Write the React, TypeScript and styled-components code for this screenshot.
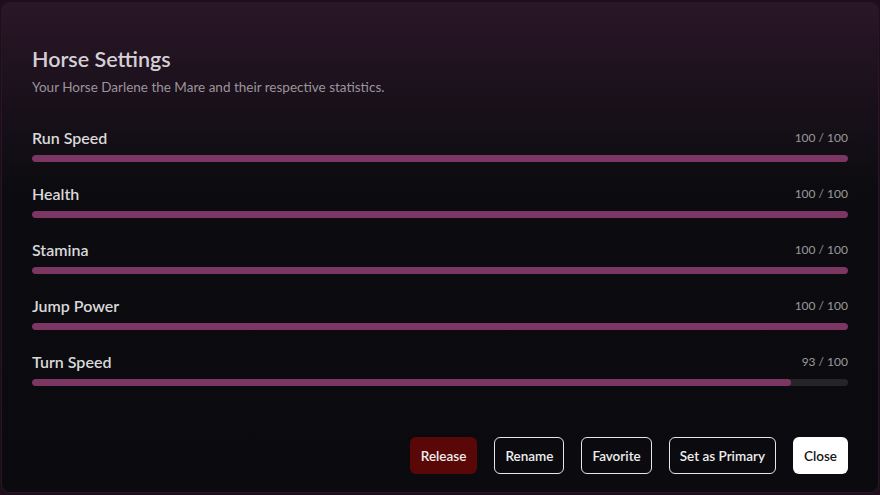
import React from "react";
import styled, { createGlobalStyle } from "styled-components";

const Global = createGlobalStyle`
  html, body { margin: 0; padding: 0; height: 100%; }
  body {
    background: #1c0e1a;
    font-family: "Source Sans Pro", Lato, "Noto Sans", sans-serif;
  }
  #root { height: 100%; }
`;

const Page = styled.div`
  box-sizing: border-box;
  height: 100vh;
  padding: 2px 1px 2px 1px;
`;

const Card = styled.div`
  box-sizing: border-box;
  height: 100%;
  border-radius: 9px;
  border: 1px solid #2a1527;
  background: linear-gradient(180deg, #2a1628 0%, #181019 22%, #0c0c10 38%, #0b0b0f 100%);
  padding: 42px 30px 18px 30px;
  display: flex;
  flex-direction: column;
`;

const Title = styled.h1`
  margin: 0;
  font-size: 21.5px;
  font-weight: 600;
  color: #d5cfd5;
  line-height: 28px;
`;

const Subtitle = styled.p`
  margin: 5px 0 0 0;
  font-size: 13.5px;
  color: #9b949b;
  line-height: 18px;
`;

const Stats = styled.div`
  margin-top: 31px;
  display: flex;
  flex-direction: column;
  gap: 21px;
`;

const Stat = styled.div`
  display: flex;
  flex-direction: column;
  gap: 8px;
`;

const StatHead = styled.div`
  display: flex;
  justify-content: space-between;
  align-items: center;
  height: 20px;
`;

const Label = styled.span`
  font-size: 16px;
  font-weight: 600;
  color: #d9d9d9;
`;

const Value = styled.span`
  font-size: 12px;
  color: #9a9a9a;
`;

const Track = styled.div`
  height: 7px;
  border-radius: 4px;
  background: #252527;
  overflow: hidden;
`;

const Fill = styled.div`
  height: 100%;
  border-radius: 4px;
  background: #7b3664;
`;

const Footer = styled.div`
  margin-top: auto;
  display: flex;
  justify-content: flex-end;
  gap: 17px;
`;

const Button = styled.button<{ $variant: "danger" | "outline" | "solid" }>`
  box-sizing: border-box;
  height: 37px;
  padding: 0 10px;
  border-radius: 6px;
  font-family: inherit;
  font-size: 13.5px;
  font-weight: 600;
  cursor: pointer;
  border: 1.5px solid
    ${(p) => (p.$variant === "outline" ? "#e6e6e6" : "transparent")};
  background: ${(p) =>
    p.$variant === "danger" ? "#5a0707" : p.$variant === "solid" ? "#ffffff" : "transparent"};
  color: ${(p) => (p.$variant === "solid" ? "#151515" : "#eeeeee")};
`;

const stats = [
  { name: "Run Speed", value: 100 },
  { name: "Health", value: 100 },
  { name: "Stamina", value: 100 },
  { name: "Jump Power", value: 100 },
  { name: "Turn Speed", value: 93 },
];

export default function App() {
  return (
    <>
      <Global />
      <Page>
        <Card>
          <Title>Horse Settings</Title>
          <Subtitle>Your Horse Darlene the Mare and their respective statistics.</Subtitle>
          <Stats>
            {stats.map((s) => (
              <Stat key={s.name}>
                <StatHead>
                  <Label>{s.name}</Label>
                  <Value>
                    {s.value} / 100
                  </Value>
                </StatHead>
                <Track>
                  <Fill style={{ width: `${s.value}%` }} />
                </Track>
              </Stat>
            ))}
          </Stats>
          <Footer>
            <Button $variant="danger">Release</Button>
            <Button $variant="outline">Rename</Button>
            <Button $variant="outline">Favorite</Button>
            <Button $variant="outline">Set as Primary</Button>
            <Button $variant="solid">Close</Button>
          </Footer>
        </Card>
      </Page>
    </>
  );
}
